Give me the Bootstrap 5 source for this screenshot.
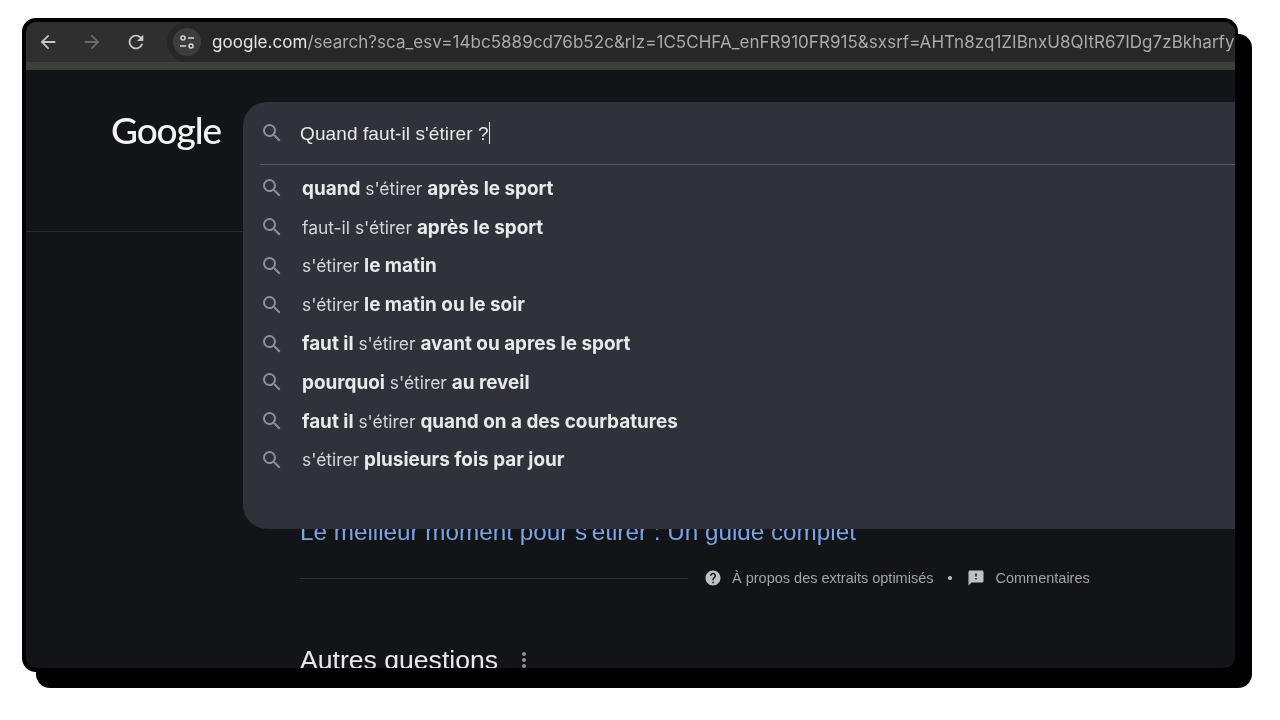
<!DOCTYPE html>
<html lang="fr">
<head>
<meta charset="UTF-8">
<title>Quand faut-il s'étirer ?</title>
<link href="https://cdn.jsdelivr.net/npm/bootstrap@5.3.0/dist/css/bootstrap.min.css" rel="stylesheet">
<style>
html, body { height: 720px; overflow: hidden; background: #fff; }
.shot-frame { position: relative; width: 1216px; height: 654px; margin: 18px 0 0 22px; }
.shot-frame::before { content: ""; position: absolute; left: 14px; top: 16px; width: 1216px; height: 654px; background: #000; border-radius: 14px; }
.win { position: relative; height: 654px; background: #131418; border: solid #000; border-width: 4px 3px 4px 4px; border-radius: 14px; overflow: hidden; filter: blur(.35px); }
.tool-bar { height: 48px; background: #2f2f2f; border-bottom: 8px solid #3d3f3d; padding-left: 4px; }
.tool-btn { width: 36px; height: 40px; margin-right: 8px; }
.tool-btn svg { width: 22px; height: 22px; fill: #c4c5c5; }
.tool-btn.off svg { fill: #6b6c6c; }
.addr-pill { flex: 1; height: 40px; margin-left: 5px; background: #272727; border-radius: 20px 0 0 20px; padding-left: 6px; white-space: nowrap; overflow: hidden; font: 17px Inter, sans-serif; letter-spacing: .04px; color: #a9aaaa; }
.addr-pill b { font-weight: 400; color: #e6e6e6; }
.tune-ico { width: 28px; height: 28px; border-radius: 50%; background: #3d3d3d; margin-right: 11px; flex: none; }
.page-head { height: 162px; border-bottom: 1px solid #2c2d31; padding: 36px 0 0 85px; }
.g-logo { font: 500 37px/48px Lato, sans-serif; letter-spacing: -1.1px; color: #f2f3f3; }
.page-body { padding-left: 274px; }
.res-title { margin-top: 285px; font: 24.25px/30px "Liberation Sans", sans-serif; color: #7ba3e8; }
.res-meta { margin-top: 19px; height: 24px; font: 14.5px "Liberation Sans", sans-serif; color: #a2a4a7; }
.meta-line { width: 388px; height: 1px; background: #303136; margin-right: 16px; }
.meta-ico { width: 18px; height: 18px; fill: #bfc0c2; flex: none; margin-right: 10px; }
.meta-dot { width: 4px; height: 4px; border-radius: 50%; background: #bfc0c2; margin: 0 15px 0 15px; }
.more-head { margin-top: 52px; font: 26.6px/36px "Liberation Sans", sans-serif; color: #e8e9ea; }
.more-head svg { width: 24px; height: 24px; fill: #8f9092; margin-left: 14px; }
.sugg-panel { position: absolute; left: 217px; top: 80px; right: 0; height: 427px; background: #303139; border-radius: 24px 0 0 24px; padding-left: 17px; }
.sugg-input { height: 63px; border-bottom: 1px solid #5b5d64; font: 19px "Liberation Sans", sans-serif; letter-spacing: .1px; color: #e8e9ea; }
.ico-search { width: 24px; height: 24px; fill: #8f9095; flex: none; margin-right: 16px; }
.text-cursor { display: inline-block; width: 1px; height: 22px; background: #e8e9ea; vertical-align: -4px; }
.sugg-list { padding-top: 4px; }
.sugg-list .list-group-item { height: 38.8px; padding: 0; background: transparent; border: 0; color: #d5d6d8; font: 17.4px Inter, sans-serif; }
.sugg-list .ico-search { margin-right: 18px; }
.sugg-list b { font-size: 18.9px; font-weight: 700; color: #e8e9ea; }
</style>
</head>
<body>
<div class="shot-frame">
    <div class="win">
        <div class="tool-bar d-flex align-items-center">
            <div class="tool-btn d-flex align-items-center justify-content-center"><svg viewBox="0 0 24 24"><path d="M20 11H7.83l5.59-5.59L12 4l-8 8 8 8 1.41-1.41L7.83 13H20v-2z"/></svg></div>
            <div class="tool-btn off d-flex align-items-center justify-content-center"><svg viewBox="0 0 24 24"><path d="M4 11h12.17l-5.59-5.59L12 4l8 8-8 8-1.41-1.41L16.17 13H4v-2z"/></svg></div>
            <div class="tool-btn d-flex align-items-center justify-content-center"><svg viewBox="0 0 24 24"><path d="M17.65 6.35A7.958 7.958 0 0 0 12 4c-4.42 0-7.99 3.58-7.99 8s3.57 8 7.99 8c3.73 0 6.84-2.55 7.73-6h-2.08A5.99 5.99 0 0 1 12 18c-3.31 0-6-2.69-6-6s2.69-6 6-6c1.66 0 3.14.69 4.22 1.78L13 11h7V4l-2.35 2.35z"/></svg></div>
            <div class="addr-pill d-flex align-items-center">
                <div class="tune-ico d-flex align-items-center justify-content-center">
                    <svg width="18" height="18" viewBox="0 0 18 18" fill="none" stroke="#d8d8d8" stroke-width="1.5"><circle cx="5" cy="5" r="2"/><path d="M10 5h6M2 13h6"/><circle cx="13" cy="13" r="2"/></svg>
                </div>
                <span><b>google.com</b>/search?sca_esv=14bc5889cd76b52c&amp;rlz=1C5CHFA_enFR910FR915&amp;sxsrf=AHTn8zq1ZIBnxU8QItR67IDg7zBkharfy</span>
            </div>
        </div>
        <div class="page-head"><span class="g-logo">Google</span></div>
        <div class="page-body">
            <div class="res-title">Le meilleur moment pour s'étirer : Un guide complet</div>
            <div class="res-meta d-flex align-items-center">
                <div class="meta-line"></div>
                <svg class="meta-ico" viewBox="0 0 24 24"><path d="M12 2C6.48 2 2 6.48 2 12s4.48 10 10 10 10-4.48 10-10S17.52 2 12 2zm1 17h-2v-2h2v2zm2.07-7.75l-.9.92C13.45 12.9 13 13.5 13 15h-2v-.5c0-1.1.45-2.1 1.17-2.83l1.24-1.26c.37-.36.59-.86.59-1.41 0-1.1-.9-2-2-2s-2 .9-2 2H8c0-2.21 1.79-4 4-4s4 1.79 4 4c0 .88-.36 1.68-.93 2.25z"/></svg>
                <span>À propos des extraits optimisés</span>
                <div class="meta-dot"></div>
                <svg class="meta-ico" viewBox="0 0 24 24"><path d="M20 2H4c-1.1 0-2 .9-2 2v18l4-4h14c1.1 0 2-.9 2-2V4c0-1.1-.9-2-2-2zm-7 12h-2v-2h2v2zm0-4h-2V6h2v4z"/></svg>
                <span>Commentaires</span>
            </div>
            <div class="more-head d-flex align-items-center">Autres questions<svg viewBox="0 0 24 24"><path d="M12 8c1.1 0 2-.9 2-2s-.9-2-2-2-2 .9-2 2 .9 2 2 2zm0 2c-1.1 0-2 .9-2 2s.9 2 2 2 2-.9 2-2-.9-2-2-2zm0 6c-1.1 0-2 .9-2 2s.9 2 2 2 2-.9 2-2-.9-2-2-2z"/></svg></div>
        </div>
        <div class="sugg-panel">
            <div class="sugg-input d-flex align-items-center">
                <svg class="ico-search" viewBox="0 0 24 24"><path d="M15.5 14h-.79l-.28-.27A6.471 6.471 0 0 0 16 9.5 6.5 6.5 0 1 0 9.5 16c1.61 0 3.09-.59 4.23-1.57l.27.28v.79l5 4.99L20.49 19l-4.99-5zm-6 0C7.01 14 5 11.99 5 9.5S7.01 5 9.5 5 14 7.01 14 9.5 11.99 14 9.5 14z"/></svg>
                <span>Quand faut-il s'étirer ?<span class="text-cursor"></span></span>
            </div>
            <ul class="list-group sugg-list" id="suggList"></ul>
        </div>
    </div>
</div>
<script>
const suggestions = [
    "<b>quand</b> s'étirer <b>après le sport</b>",
    "faut-il s'étirer <b>après le sport</b>",
    "s'étirer <b>le matin</b>",
    "s'étirer <b>le matin ou le soir</b>",
    "<b>faut il</b> s'étirer <b>avant ou apres le sport</b>",
    "<b>pourquoi</b> s'étirer <b>au reveil</b>",
    "<b>faut il</b> s'étirer <b>quand on a des courbatures</b>",
    "s'étirer <b>plusieurs fois par jour</b>"
];
const searchIcon = document.querySelector(".ico-search").outerHTML;
document.getElementById("suggList").innerHTML = suggestions.map(s =>
    `<li class="list-group-item d-flex align-items-center">${searchIcon}<span>${s}</span></li>`
).join("");
</script>
<script src="https://cdn.jsdelivr.net/npm/bootstrap@5.3.0/dist/js/bootstrap.bundle.min.js"></script>
</body>
</html>
